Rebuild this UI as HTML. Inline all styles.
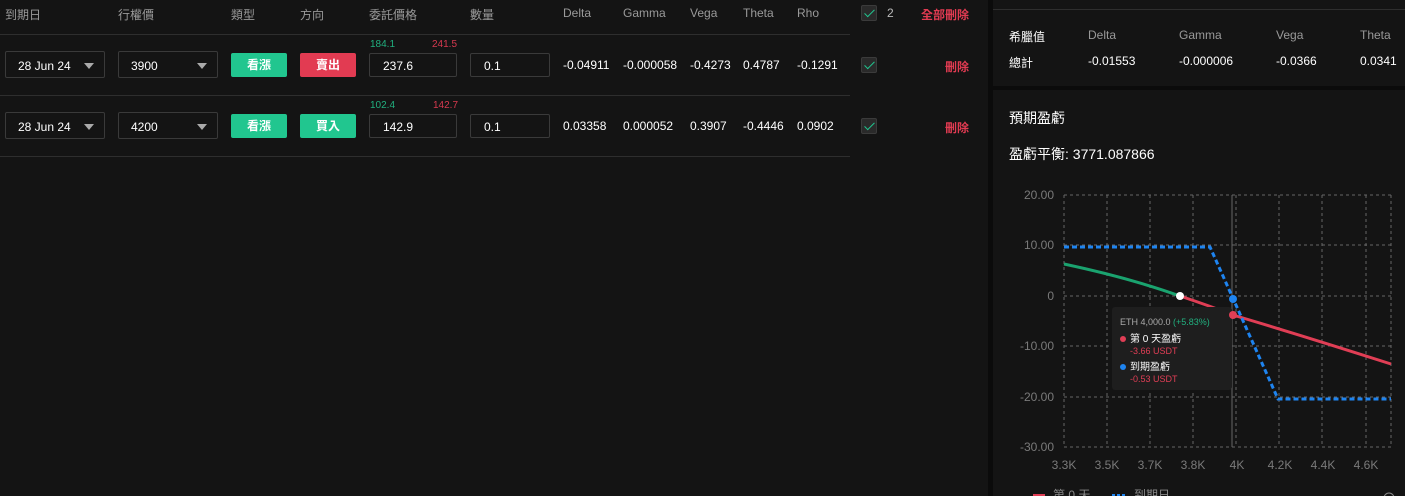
<!DOCTYPE html>
<html><head><meta charset="utf-8"><style>
*{margin:0;padding:0;box-sizing:border-box}
body{width:1405px;height:496px;background:#0b0b0b;font-family:"Liberation Sans","Noto Sans CJK TC",sans-serif;color:#fff;position:relative;overflow:hidden;font-size:12px}
.a{position:absolute;white-space:nowrap}
.left{position:absolute;left:0;top:0;width:988px;height:496px;background:#141414}
.hd{color:#9a9a9a;font-size:12px;top:6px}
.line{position:absolute;height:1px;background:#2e2e2e;left:0;width:850px}
.sel{position:absolute;border:1px solid #3a3a3a;height:27px;border-radius:2px;font-size:12px;padding:7px 0 0 12px}
.tri{position:absolute;right:10px;top:11px;width:0;height:0;border-left:5px solid transparent;border-right:5px solid transparent;border-top:6px solid #aaa}
.btn{position:absolute;height:24px;width:56px;border-radius:2px;text-align:center;font-size:12px;font-weight:bold;line-height:24px}
.g{background:#21c68f}.r{background:#e23b52}
.cb{position:absolute;width:16px;height:16px;background:#2a2a2a;border:1px solid #3b3b3b;border-radius:2px}
.cb:after{content:"";position:absolute;left:5px;top:1px;width:4px;height:9px;border:solid #21c68f;border-width:0 1.5px 1.5px 0;transform:rotate(45deg)}
.del{color:#e23b52;font-weight:bold}
.sm{font-size:10px}
</style></head><body>
<div class="left">
<div class="a hd" style="left:5px">到期日</div>
<div class="a hd" style="left:118px">行權價</div>
<div class="a hd" style="left:231px">類型</div>
<div class="a hd" style="left:300px">方向</div>
<div class="a hd" style="left:369px">委託價格</div>
<div class="a hd" style="left:470px">數量</div>
<div class="a hd" style="left:563px">Delta</div>
<div class="a hd" style="left:623px">Gamma</div>
<div class="a hd" style="left:690px">Vega</div>
<div class="a hd" style="left:743px">Theta</div>
<div class="a hd" style="left:797px">Rho</div>
<div class="cb" style="left:861px;top:5px"></div>
<div class="a hd" style="left:887px;color:#bbb">2</div>
<div class="a hd del" style="left:921px">全部刪除</div>
<div class="line" style="top:34px"></div>
<div class="line" style="top:95px"></div>
<div class="line" style="top:156px"></div>

<div class="sel" style="left:5px;top:51px;width:100px">28 Jun 24<div class="tri"></div></div>
<div class="sel" style="left:118px;top:51px;width:100px">3900<div class="tri"></div></div>
<div class="btn g" style="left:231px;top:53px">看漲</div>
<div class="btn r" style="left:300px;top:53px">賣出</div>
<div class="a sm" style="left:370px;top:39px;color:#21b07f">184.1</div>
<div class="a sm" style="left:432px;top:39px;color:#d7394f">241.5</div>
<div class="sel" style="left:369px;top:53px;width:88px;height:24px;padding:5px 0 0 13px">237.6</div>
<div class="sel" style="left:470px;top:53px;width:80px;height:24px;padding:5px 0 0 13px">0.1</div>
<div class="a" style="left:563px;top:58px">-0.04911</div>
<div class="a" style="left:623px;top:58px">-0.000058</div>
<div class="a" style="left:690px;top:58px">-0.4273</div>
<div class="a" style="left:743px;top:58px">0.4787</div>
<div class="a" style="left:797px;top:58px">-0.1291</div>
<div class="cb" style="left:861px;top:57px"></div>
<div class="a del" style="left:945px;top:58px">刪除</div>

<div class="sel" style="left:5px;top:112px;width:100px">28 Jun 24<div class="tri"></div></div>
<div class="sel" style="left:118px;top:112px;width:100px">4200<div class="tri"></div></div>
<div class="btn g" style="left:231px;top:114px">看漲</div>
<div class="btn g" style="left:300px;top:114px">買入</div>
<div class="a sm" style="left:370px;top:100px;color:#21b07f">102.4</div>
<div class="a sm" style="left:433px;top:100px;color:#d7394f">142.7</div>
<div class="sel" style="left:369px;top:114px;width:88px;height:24px;padding:5px 0 0 13px">142.9</div>
<div class="sel" style="left:470px;top:114px;width:80px;height:24px;padding:5px 0 0 13px">0.1</div>
<div class="a" style="left:563px;top:119px">0.03358</div>
<div class="a" style="left:623px;top:119px">0.000052</div>
<div class="a" style="left:690px;top:119px">0.3907</div>
<div class="a" style="left:743px;top:119px">-0.4446</div>
<div class="a" style="left:797px;top:119px">0.0902</div>
<div class="cb" style="left:861px;top:118px"></div>
<div class="a del" style="left:945px;top:119px">刪除</div>
</div>

<div style="position:absolute;left:993px;top:0;width:412px;height:86px;background:#141414"></div>
<div style="position:absolute;left:993px;top:9px;width:412px;height:1px;background:#2e2e2e"></div>
<div class="a" style="left:1009px;top:28px">希臘值</div>
<div class="a" style="left:1088px;top:28px;color:#999">Delta</div>
<div class="a" style="left:1179px;top:28px;color:#999">Gamma</div>
<div class="a" style="left:1276px;top:28px;color:#999">Vega</div>
<div class="a" style="left:1360px;top:28px;color:#999">Theta</div>
<div class="a" style="left:1009px;top:54px">總計</div>
<div class="a" style="left:1088px;top:54px">-0.01553</div>
<div class="a" style="left:1179px;top:54px">-0.000006</div>
<div class="a" style="left:1276px;top:54px">-0.0366</div>
<div class="a" style="left:1360px;top:54px">0.0341</div>

<div style="position:absolute;left:993px;top:90px;width:412px;height:406px;background:#141414"></div>
<div class="a" style="left:1009px;top:108px;font-size:14px">預期盈虧</div>
<div class="a" style="left:1009px;top:144px;font-size:14px">盈虧平衡: 3771.087866</div>

<svg class="a" style="left:993px;top:90px" width="412" height="406" viewBox="993 90 412 406">
<g stroke="#666" stroke-dasharray="3,3" stroke-width="1" fill="none">
<path d="M1064 195H1391M1064 245H1391M1064 296H1391M1064 346H1391M1064 397H1391M1064 447H1391"/>
<path d="M1064 195V447M1107 195V447M1150 195V447M1193 195V447M1236 195V447M1279 195V447M1322 195V447M1366 195V447M1391 195V447"/>
</g>
<line x1="1232" y1="195" x2="1232" y2="447" stroke="#666" stroke-width="1"/>
<g fill="#7a7a7a" font-size="12" text-anchor="end" font-family="Liberation Sans">
<text x="1054" y="199">20.00</text><text x="1054" y="249">10.00</text><text x="1054" y="300">0</text>
<text x="1054" y="350">-10.00</text><text x="1054" y="401">-20.00</text><text x="1054" y="451">-30.00</text>
</g>
<g fill="#7a7a7a" font-size="12" text-anchor="middle" font-family="Liberation Sans">
<text x="1064" y="469">3.3K</text><text x="1107" y="469">3.5K</text><text x="1150" y="469">3.7K</text><text x="1193" y="469">3.8K</text>
<text x="1237" y="469">4K</text><text x="1280" y="469">4.2K</text><text x="1323" y="469">4.4K</text><text x="1366" y="469">4.6K</text>
</g>
<path d="M1064 264Q1130 278 1180 296" stroke="#1aa36f" stroke-width="3" fill="none"/>
<path d="M1180 296Q1210 306 1233 315Q1310 338 1391 364" stroke="#e03e55" stroke-width="3" fill="none"/>
<path d="M1064 247H1210L1278 399H1391" stroke="#1e84f0" stroke-width="3" stroke-dasharray="5,3" fill="none"/>
<rect x="1112" y="307" width="120" height="83" rx="3" fill="#1e1e1e"/>
<text x="1120" y="325" font-size="9" fill="#aaa" font-family="Liberation Sans">ETH 4,000.0 <tspan fill="#21b07f">(+5.83%)</tspan></text>
<circle cx="1123" cy="339" r="3" fill="#e03e55"/>
<text x="1130" y="342" font-size="10" fill="#fff" font-family="Liberation Sans,Noto Sans CJK TC">第 0 天盈虧</text>
<text x="1130" y="354" font-size="9" fill="#e03e55" font-family="Liberation Sans">-3.66 USDT</text>
<circle cx="1123" cy="367" r="3" fill="#1e84f0"/>
<text x="1130" y="370" font-size="10" fill="#fff" font-family="Liberation Sans,Noto Sans CJK TC">到期盈虧</text>
<text x="1130" y="382" font-size="9" fill="#e03e55" font-family="Liberation Sans">-0.53 USDT</text>
<circle cx="1180" cy="296" r="4" fill="#fff"/>
<circle cx="1233" cy="299" r="4" fill="#1e84f0"/>
<circle cx="1233" cy="315" r="4" fill="#e03e55"/>
<rect x="1033" y="494" width="12" height="2" fill="#e03e55"/>
<text x="1053" y="499" font-size="12" fill="#888" font-family="Liberation Sans,Noto Sans CJK TC">第 0 天</text>
<path d="M1112 495h14" stroke="#1e84f0" stroke-width="2" stroke-dasharray="3,2"/>
<text x="1134" y="499" font-size="12" fill="#888" font-family="Liberation Sans,Noto Sans CJK TC">到期日</text>
<circle cx="1389" cy="498" r="5" stroke="#888" fill="none"/>
</svg>
</body></html>
